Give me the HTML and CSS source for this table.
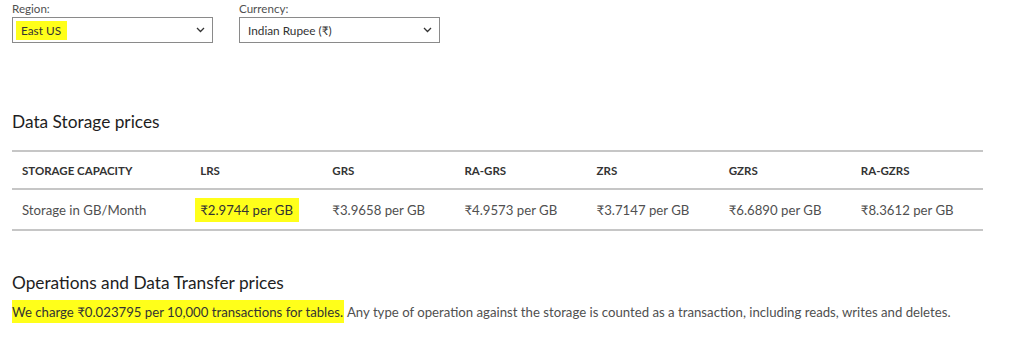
FILE: index.html
```html
<!DOCTYPE html>
<html lang="en">
<head>
<meta charset="utf-8">
<title>Table Storage pricing</title>
<link rel="stylesheet" href="styles.css">
</head>
<body>
<div class="page">
  <div class="filters">
    <div class="field">
      <div class="field-label">Region:</div>
      <div class="select">
        <span class="select-value"><mark class="hl">East US</mark></span>
        <svg class="chev" width="9" height="6" viewBox="0 0 9 6"><path d="M1 1 L4.5 4.5 L8 1" fill="none" stroke="#333" stroke-width="1.3"/></svg>
      </div>
    </div>
    <div class="field">
      <div class="field-label">Currency:</div>
      <div class="select">
        <span class="select-value">Indian Rupee (₹)</span>
        <svg class="chev" width="9" height="6" viewBox="0 0 9 6"><path d="M1 1 L4.5 4.5 L8 1" fill="none" stroke="#333" stroke-width="1.3"/></svg>
      </div>
    </div>
  </div>

  <h2 class="section-title first">Data Storage prices</h2>
  <table class="prices">
    <thead>
      <tr>
        <th class="c-first">STORAGE CAPACITY</th>
        <th>LRS</th>
        <th>GRS</th>
        <th>RA-GRS</th>
        <th>ZRS</th>
        <th>GZRS</th>
        <th>RA-GZRS</th>
      </tr>
    </thead>
    <tbody>
      <tr>
        <td class="c-first">Storage in GB/Month</td>
        <td><mark class="hl hl-cell">₹2.9744 per GB</mark></td>
        <td>₹3.9658 per GB</td>
        <td>₹4.9573 per GB</td>
        <td>₹3.7147 per GB</td>
        <td>₹6.6890 per GB</td>
        <td>₹8.3612 per GB</td>
      </tr>
    </tbody>
  </table>

  <h2 class="section-title">Operations and Data Transfer prices</h2>
  <p class="ops"><mark class="hl hl-para">We charge ₹0.023795 per 10,000 transactions for tables.</mark> Any type of operation against the storage is counted as a transaction, including reads, writes and deletes.</p>
</div>
</body>
</html>
```
FILE: styles.css
```css
html, body {
  margin: 0;
  padding: 0;
  background: #ffffff;
}

body {
  font-family: Lato, "Noto Sans", "DejaVu Sans", sans-serif;
  color: #505050;
  font-size: 13px;
}

.page {
  padding: 0 20px 0 12px;
}

.filters {
  display: flex;
  gap: 26px;
}

.field-label {
  font-size: 11.6px;
  line-height: 17px;
  color: #505050;
}

.select {
  box-sizing: border-box;
  width: 201px;
  height: 26px;
  border: 1px solid #8a8a8a;
  display: flex;
  align-items: center;
  justify-content: space-between;
  padding: 0 7px 0 3px;
  font-size: 11.8px;
  color: #333333;
}

.field:last-child .select-value {
  padding-left: 5px;
}

.hl {
  background: #ffff1a;
  color: #333333;
}

.select .hl {
  padding: 2px 6px 2px 5px;
}

.section-title {
  font-weight: 400;
  font-size: 17.3px;
  color: #1e1e1e;
  margin: 0;
  line-height: 22px;
}

.section-title.first {
  margin-top: 68px;
  margin-bottom: 17px;
}

.prices {
  width: 971px;
  border-collapse: collapse;
  table-layout: fixed;
  border-top: 2px solid #c6c6c6;
  border-bottom: 2px solid #c6c6c6;
}

.prices th,
.prices td {
  text-align: left;
  padding: 0 10px;
  width: 112px;
}

.prices .c-first {
  width: 158px;
}

.prices th {
  height: 36px;
  font-size: 11.5px;
  font-weight: 700;
  color: #333333;
  border-bottom: 2px solid #c6c6c6;
}

.prices td {
  height: 38px;
  padding-top: 1px;
  font-size: 13.2px;
  color: #505050;
}

.hl-cell {
  padding: 4px 6px 4px 5px;
  margin-left: -5px;
}

.prices + .section-title {
  margin-top: 41px;
}

.ops {
  margin: 7px 0 0;
  font-size: 13.2px;
  line-height: 22px;
  color: #505050;
}

.hl-para {
  padding: 4px 1px 4px 0;
}
```
